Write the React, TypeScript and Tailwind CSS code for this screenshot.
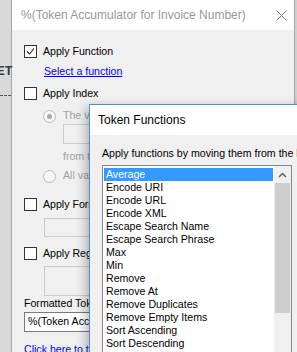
import { FC } from 'react';

const items = [
  'Average',
  'Encode URI',
  'Encode URL',
  'Encode XML',
  'Escape Search Name',
  'Escape Search Phrase',
  'Max',
  'Min',
  'Remove',
  'Remove At',
  'Remove Duplicates',
  'Remove Empty Items',
  'Sort Ascending',
  'Sort Descending',
  'Split',
  'Sum',
];

const Check: FC<{ checked?: boolean }> = ({ checked }) => (
  <span className="flex h-[13px] w-[13px] shrink-0 items-center justify-center border border-[#333333] bg-white">
    {checked && (
      <svg width="9" height="9" viewBox="0 0 9 9">
        <path d="M1 4.5 L3.5 7 L8 1.5" fill="none" stroke="#222" strokeWidth="1.1" />
      </svg>
    )}
  </span>
);

const Radio: FC<{ checked?: boolean }> = ({ checked }) => (
  <span className="flex h-[13px] w-[13px] shrink-0 items-center justify-center rounded-full border border-[#bcbcbc] bg-[#f6f6f6]">
    {checked && <span className="h-[5px] w-[5px] rounded-full bg-[#a8a8a8]" />}
  </span>
);

const App: FC = () => {
  return (
    <div className="relative flex h-[352px] w-[297px] overflow-hidden bg-[#d6d6d6] font-['Liberation_Sans',Arial,sans-serif] text-[10.6px] text-black">
      {/* desktop behind */}
      <div className="relative w-[11px] shrink-0 bg-[#d9d9d9]">
        <span className="absolute left-[-3px] top-[62px] font-['Liberation_Mono',monospace] text-[13px] font-bold text-[#3a3a3a]">
          ET
        </span>
        <div className="absolute left-0 top-[95px] w-[11px] border-t border-dashed border-[#555]" />
      </div>

      {/* main window */}
      <div className="flex w-[284px] shrink-0 flex-col border-l border-r border-[#a5a5a5] bg-[#f0f0f0]">
        <div className="flex h-[30px] shrink-0 items-center justify-between bg-white pl-[9px] pr-[7px] text-[12px] text-[#999999]">
          <span className="whitespace-nowrap">%(Token Accumulator for Invoice Number)</span>
          <svg width="11" height="11" viewBox="0 0 11 11">
            <path d="M0.5 0.5 L10.5 10.5 M10.5 0.5 L0.5 10.5" stroke="#7a7a7a" strokeWidth="1" />
          </svg>
        </div>

        <div className="flex shrink-0 flex-col pl-[12px] pt-[15px] whitespace-nowrap">
          <div className="flex h-[13px] shrink-0 items-center gap-[6px]">
            <Check checked />
            <span>Apply Function</span>
          </div>
          <span className="ml-[20px] mt-[6px] h-[14px] shrink-0 leading-[14px] text-[#0000ff] underline">
            Select a function
          </span>

          <div className="mt-[9px] flex h-[13px] shrink-0 items-center gap-[6px]">
            <Check />
            <span>Apply Index</span>
          </div>
          <div className="ml-[19px] mt-[9px] flex h-[14px] shrink-0 items-center gap-[7px] text-[#a0a0a0]">
            <Radio checked />
            <span>The value at index</span>
          </div>
          <div className="ml-[39px] mt-[1px] h-[20px] w-[60px] shrink-0 border border-[#cccccc] bg-[#f0f0f0]" />
          <span className="ml-[39px] mt-[6px] h-[13px] shrink-0 leading-[13px] text-[#a0a0a0]">from the end</span>
          <div className="ml-[19px] mt-[6px] flex h-[14px] shrink-0 items-center gap-[7px] text-[#a0a0a0]">
            <Radio />
            <span>All values</span>
          </div>

          <div className="mt-[15px] flex h-[13px] shrink-0 items-center gap-[6px]">
            <Check />
            <span>Apply Format</span>
          </div>
          <div className="ml-[20px] mt-[7px] h-[19px] w-[240px] shrink-0 border border-[#cccccc] bg-[#f0f0f0]" />

          <div className="mt-[10px] flex h-[13px] shrink-0 items-center gap-[6px]">
            <Check />
            <span>Apply Regex</span>
          </div>
          <div className="ml-[20px] mt-[6px] h-[30px] w-[240px] shrink-0 border border-[#cccccc] bg-[#f0f0f0]" />

          <span className="h-[14px] shrink-0 leading-[14px]">Formatted Token</span>
          <div className="mt-[2px] flex h-[20px] w-[258px] shrink-0 items-center border border-[#7a7a7a] bg-white px-[3px]">
            %(Token Accumulator for Invoice Number)
          </div>
          <span className="mt-[10px] h-[14px] shrink-0 leading-[14px] text-[#0000ff] underline">
            Click here to test the token
          </span>
        </div>
      </div>

      <div className="w-[2px] shrink-0 bg-[#cfcfcf]" />

      {/* Token Functions dialog, a window over the main one */}
      <div className="absolute left-[89px] top-[104px] flex h-[320px] w-[260px] flex-col border border-[#4a8fd6] bg-[#f0f0f0] shadow-[-3px_3px_10px_rgba(0,0,0,0.28)]">
        <div className="flex h-[30px] shrink-0 items-center bg-white pl-[8px] text-[12px]">Token Functions</div>
        <span className="ml-[12px] mt-[11px] h-[14px] shrink-0 whitespace-nowrap leading-[14px]">
          Apply functions by moving them from the list on the left to the list on the right.
        </span>
        <div className="ml-[12px] mt-[5px] flex h-[220px] w-[190px] shrink-0 border border-[#828790] bg-white">
          <div className="flex flex-1 flex-col px-[1px] pt-[2px]">
            {items.map((item, i) => (
              <div
                key={item}
                className={
                  i === 0
                    ? 'h-[13px] shrink-0 whitespace-nowrap bg-[#3399ff] pl-[2px] leading-[13px] text-white'
                    : 'h-[13px] shrink-0 whitespace-nowrap pl-[2px] leading-[13px]'
                }
              >
                {item}
              </div>
            ))}
          </div>
          <div className="flex w-[17px] flex-col bg-[#f0f0f0]">
            <div className="flex h-[17px] shrink-0 items-center justify-center">
              <svg width="9" height="6" viewBox="0 0 9 6">
                <path d="M1 5 L4.5 1.5 L8 5" fill="none" stroke="#606060" strokeWidth="1.5" />
              </svg>
            </div>
            <div className="mx-[1px] h-[130px] shrink-0 bg-[#cdcdcd]" />
          </div>
        </div>
      </div>
    </div>
  );
};

export default App;
